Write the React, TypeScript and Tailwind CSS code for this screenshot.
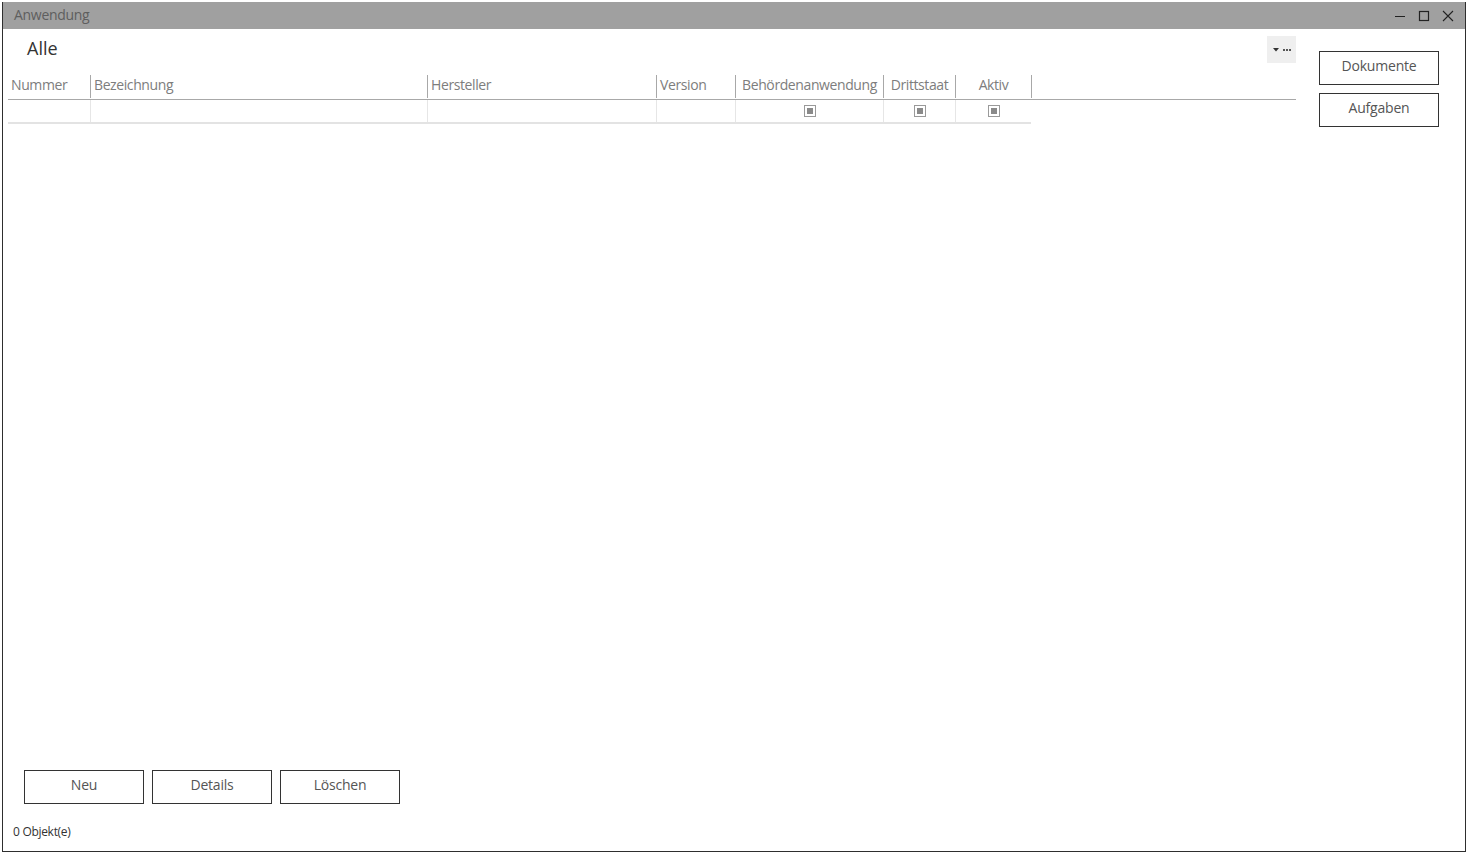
import { ReactNode } from "react";

const columns = [
    { label: "Nummer", width: "w-[82px]", align: "text-left", check: false },
    { label: "Bezeichnung", width: "w-[337px]", align: "text-left", check: false },
    { label: "Hersteller", width: "w-[229px]", align: "text-left", check: false },
    { label: "Version", width: "w-[79px]", align: "text-left", check: false },
    { label: "Behördenanwendung", width: "w-[148px]", align: "text-center", check: true },
    { label: "Drittstaat", width: "w-[72px]", align: "text-center", check: true },
    { label: "Aktiv", width: "w-[76px]", align: "text-center", check: true },
];

const Button = ({ children, className = "" }: { children: ReactNode; className?: string }) => (
    <button
        className={`w-[120px] h-[34px] border border-[#333] bg-white text-[14px] text-[#555] pb-[5px] tracking-[-0.2px] ${className}`}
    >
        {children}
    </button>
);

const CheckBox = () => (
    <span className="inline-flex items-center justify-center w-[12px] h-[12px] border border-[#9a9a9a] bg-white">
        <span className="block w-[6px] h-[6px] bg-[#8a8a8a]" />
    </span>
);

export default function App() {
    return (
        <div
            className="w-[1467px] h-[854px] bg-white pl-[2px] pt-[2px]"
            style={{ fontFamily: "'Open Sans', 'Noto Sans', sans-serif" }}
        >
            <div className="w-[1464px] h-[850px] border-x border-b border-[#2e2e2e] flex flex-col">
                {/* Title bar */}
                <div className="h-[27px] bg-[#a0a0a0] flex items-center justify-between pl-[11px] pr-[11px]">
                    <span className="text-[14px] text-[#5e5e5e] tracking-[-0.3px] pb-[2px]">Anwendung</span>
                    <div className="flex items-center gap-[12px] text-[#222]">
                        <svg width="12" height="12" viewBox="0 0 12 12">
                            <line x1="1" y1="6.5" x2="11" y2="6.5" stroke="#222" strokeWidth="1" />
                        </svg>
                        <svg width="12" height="12" viewBox="0 0 12 12">
                            <rect x="1.5" y="1.5" width="9" height="9" fill="none" stroke="#222" strokeWidth="1.2" />
                        </svg>
                        <svg width="12" height="12" viewBox="0 0 12 12">
                            <path d="M1 1 L11 11 M11 1 L1 11" stroke="#222" strokeWidth="1.1" />
                        </svg>
                    </div>
                </div>

                <div className="flex-1 flex">
                    {/* Main area */}
                    <div className="w-[1293px] flex flex-col pl-[5px]">
                        <div className="flex items-center justify-between pt-[7px] h-[34px]">
                            <span className="pl-[19px] text-[18px] text-[#333] leading-none pb-[4px]">Alle</span>
                            <div className="w-[29px] h-[27px] bg-[#efefef] flex items-center justify-center gap-[4px]">
                                <svg width="6" height="4" viewBox="0 0 6 4">
                                    <path d="M0 0 L6 0 L3 3.5 Z" fill="#333" />
                                </svg>
                                <span className="flex gap-[1px]">
                                    <span className="w-[2px] h-[2px] bg-[#555]" />
                                    <span className="w-[2px] h-[2px] bg-[#555]" />
                                    <span className="w-[2px] h-[2px] bg-[#555]" />
                                </span>
                            </div>
                        </div>

                        {/* Table */}
                        <div className="mt-[11px]">
                            <div className="flex h-[26px] border-b border-[#a8a8a8]">
                                {columns.map((col, i) => (
                                    <div
                                        key={col.label}
                                        className={`${col.width} ${col.align} flex items-center ${
                                            col.check ? "justify-center" : "pl-[3px]"
                                        } ${i > 0 ? "border-l border-[#a8a8a8]" : ""} my-[1px] pb-[4px] text-[14px] text-[#7d7d7d] tracking-[-0.4px] whitespace-nowrap`}
                                    >
                                        {col.label}
                                    </div>
                                ))}
                                <div className="border-l border-[#a8a8a8] my-[1px]" />
                            </div>
                            <div className="flex w-[1023px] h-[24px] border-b-2 border-[#e3e3e3]">
                                {columns.map((col, i) => (
                                    <div
                                        key={col.label}
                                        className={`${col.width} flex items-center justify-center ${
                                            i > 0 ? "border-l border-[#e6e6e6]" : ""
                                        }`}
                                    >
                                        {col.check && <CheckBox />}
                                    </div>
                                ))}
                            </div>
                        </div>

                        <div className="flex-1" />

                        {/* Bottom buttons */}
                        <div className="flex gap-[8px] pl-[16px]">
                            <Button>Neu</Button>
                            <Button>Details</Button>
                            <Button>Löschen</Button>
                        </div>
                        <div className="pl-[5px] pt-[19px] pb-[10px] text-[12px] text-[#333] tracking-[-0.3px]">0 Objekt(e)</div>
                    </div>

                    {/* Right panel */}
                    <div className="flex flex-col gap-[8px] pt-[22px] pl-[23px]">
                        <Button>Dokumente</Button>
                        <Button>Aufgaben</Button>
                    </div>
                </div>
            </div>
        </div>
    );
}
